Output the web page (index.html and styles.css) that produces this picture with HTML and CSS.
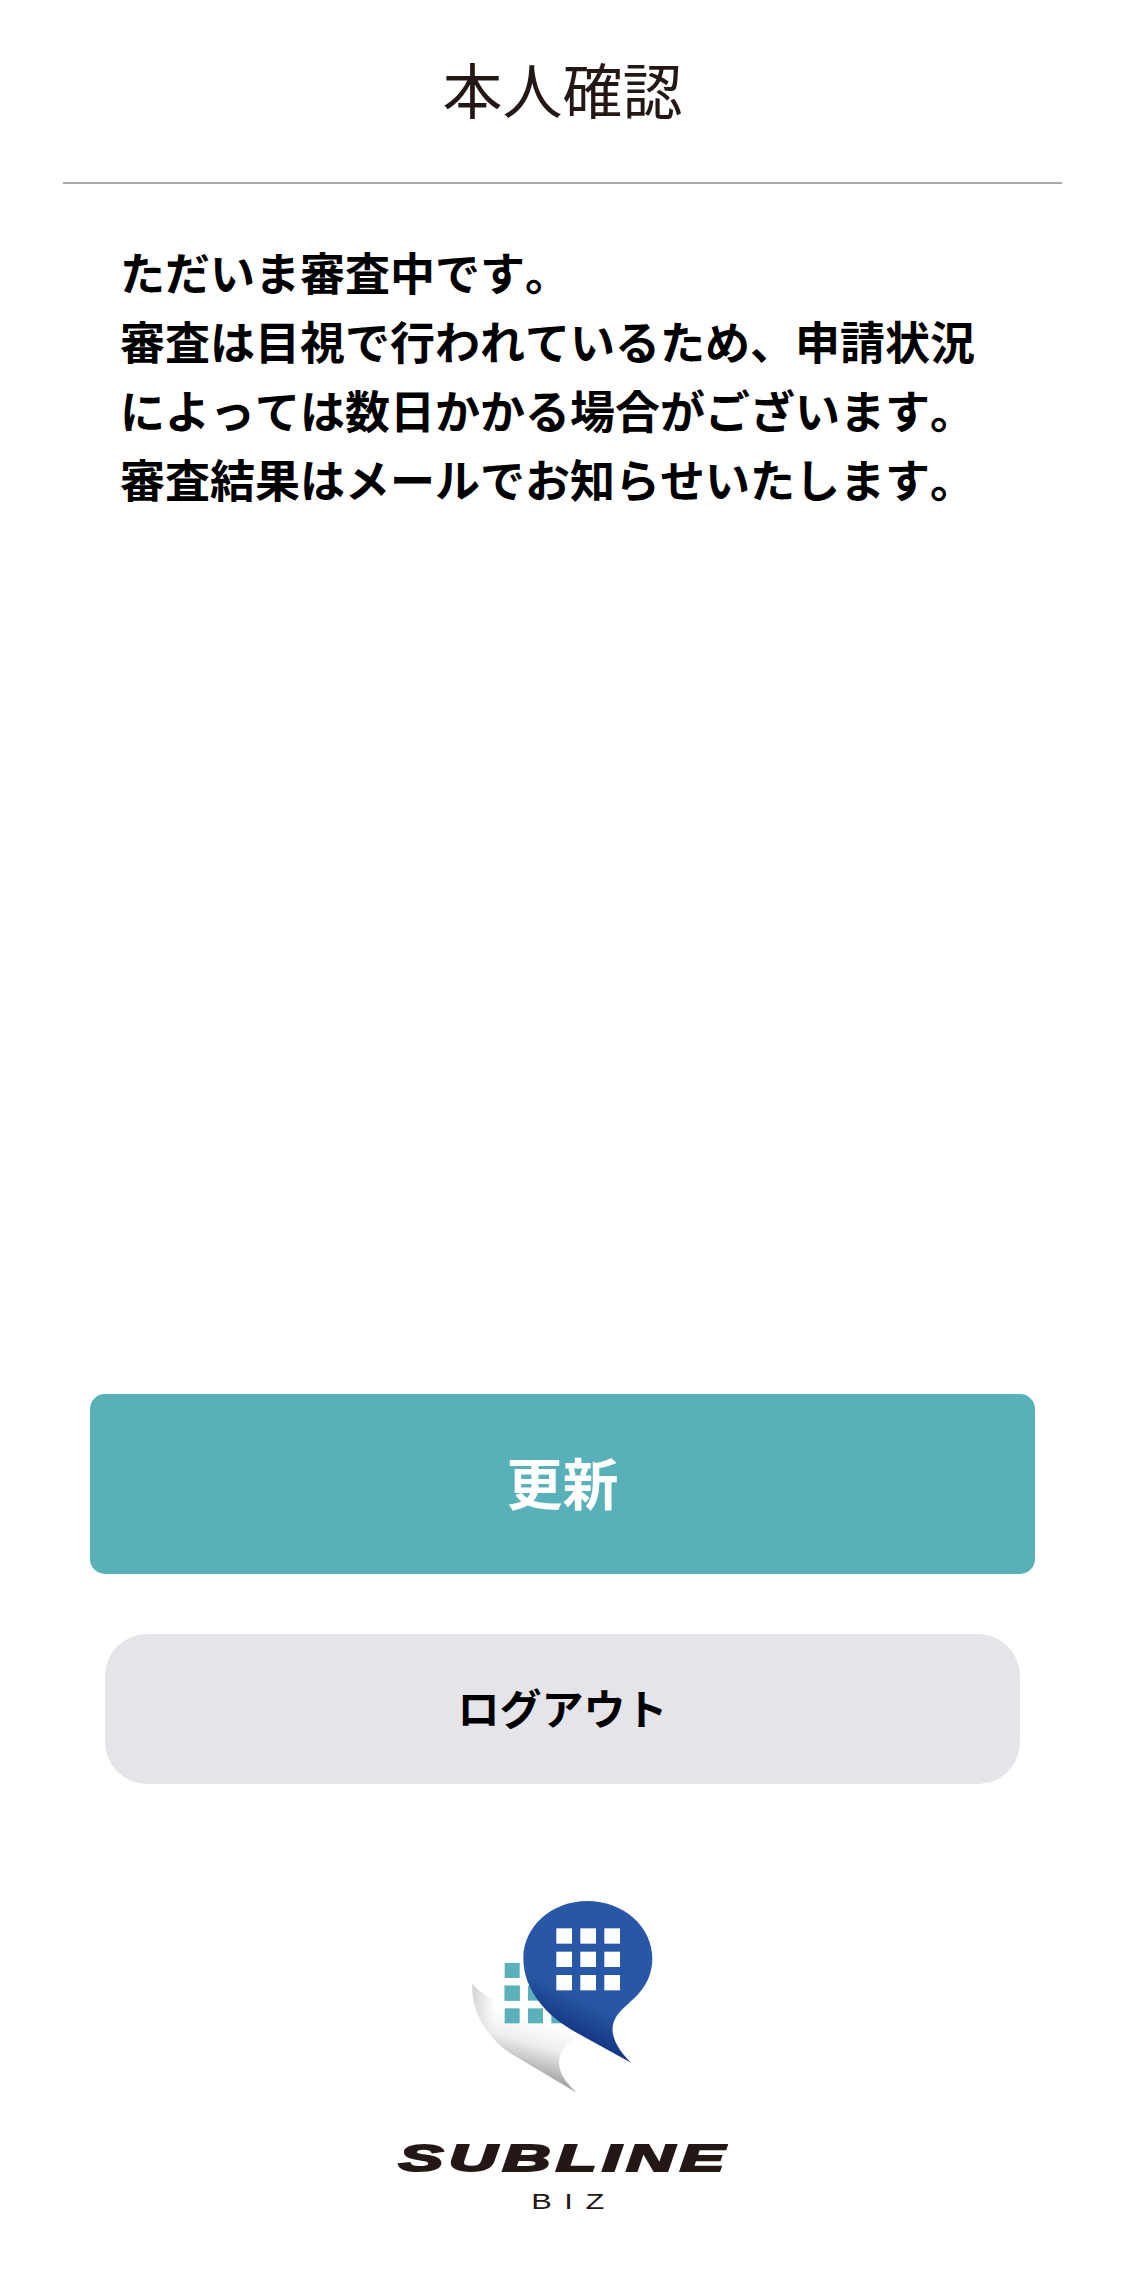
FILE: index.html
```html
<!DOCTYPE html>
<html lang="ja">
<head>
<meta charset="utf-8">
<title>本人確認</title>
<link rel="stylesheet" href="styles.css">
</head>
<body>
<main class="screen">
  <header class="header">
    <h1 class="header-title">本人確認</h1>
  </header>
  <section class="notice">
    <p class="notice-line">ただいま審査中です。</p>
    <p class="notice-line">審査は目視で行われているため、申請状況</p>
    <p class="notice-line">によっては数日かかる場合がございます。</p>
    <p class="notice-line">審査結果はメールでお知らせいたします。</p>
  </section>
  <div class="actions">
    <button class="btn-refresh" type="button">更新</button>
    <button class="btn-logout" type="button">ログアウト</button>
  </div>
  <footer class="brand">
    <svg class="brand-mark" viewBox="0 0 1110 780" aria-hidden="true">
      <defs>
        <linearGradient id="curl" gradientUnits="userSpaceOnUse" x1="440" y1="470" x2="395" y2="625">
          <stop offset="0" stop-color="#ffffff"/>
          <stop offset="0.45" stop-color="#eeeeee"/>
          <stop offset="1" stop-color="#a8a8a8"/>
        </linearGradient>
        <linearGradient id="curl-edge" gradientUnits="userSpaceOnUse" x1="277" y1="390" x2="350" y2="400">
          <stop offset="0" stop-color="#d4d4d4"/>
          <stop offset="1" stop-color="#d4d4d4" stop-opacity="0"/>
        </linearGradient>
        <linearGradient id="bubble" gradientUnits="userSpaceOnUse" x1="625" y1="370" x2="545" y2="530">
          <stop offset="0" stop-color="#2858a5"/>
          <stop offset="0.25" stop-color="#2858a5"/>
          <stop offset="1" stop-color="#11307d"/>
        </linearGradient>
      </defs>
      <!-- teal squares behind the page -->
      <g fill="#5ab0bb">
        <rect x="374" y="309" width="45" height="45"/>
        <rect x="374" y="377" width="45" height="45"/>
      </g>
      <!-- curled page -->
      <path fill="url(#curl)" d="M277 372C272 455 325 540 400 585L590 698C558 668 536 638 537 606C539 572 560 548 592 530L500 470C420 455 325 425 277 372Z"/>
      <path fill="url(#curl-edge)" d="M277 372C272 455 325 540 400 585L590 698C558 668 536 638 537 606C539 572 560 548 592 530L500 470C420 455 325 425 277 372Z"/>
      <g fill="#5ab0bb">
        <rect x="374" y="377" width="45" height="45"/>
        <rect x="444" y="377" width="45" height="45"/>
        <rect x="374" y="445" width="45" height="45"/>
        <rect x="444" y="445" width="45" height="45"/>
        <rect x="514" y="445" width="45" height="45"/>
      </g>
      <!-- speech bubble -->
      <path fill="url(#bubble)" d="M622 123C730 123 817 200 817 295C817 360 782 400 745 431C712 459 692 485 699 522C706 556 730 585 753 608L590 518C500 470 430 390 430 295C430 200 515 123 622 123Z"/>
      <g fill="#ffffff">
        <rect x="529" y="205" width="47" height="46"/>
        <rect x="601" y="205" width="47" height="46"/>
        <rect x="673" y="205" width="47" height="46"/>
        <rect x="529" y="275" width="47" height="46"/>
        <rect x="601" y="275" width="47" height="46"/>
        <rect x="673" y="275" width="47" height="46"/>
        <rect x="529" y="345" width="47" height="46"/>
        <rect x="601" y="345" width="47" height="46"/>
        <rect x="673" y="345" width="47" height="46"/>
      </g>
    </svg>
    <div class="brand-name">SUBLINE</div>
    <div class="brand-sub">BIZ</div>
  </footer>
</main>
</body>
</html>
```
FILE: styles.css
```css
* {
  box-sizing: border-box;
}

html,
body {
  margin: 0;
  padding: 0;
  background: #ffffff;
}

body {
  font-family: "Noto Sans CJK JP", "Liberation Sans", sans-serif;
  font-kerning: none;
  color: #000000;
}

.screen {
  display: flex;
  flex-direction: column;
  height: 2289px;
  overflow: hidden;
}

.header {
  display: flex;
  justify-content: center;
  align-items: center;
  height: 184px;
  margin: 0 63px;
  padding-bottom: 6px;
  border-bottom: 2px solid #a9a9a9;
}

.header-title {
  margin: 0;
  font-size: 60px;
  font-weight: 400;
  line-height: 1;
  color: #231815;
}

.notice {
  padding: 53px 0 0 120px;
}

.notice-line {
  margin: 0;
  font-size: 45px;
  font-weight: 700;
  line-height: 69px;
  white-space: nowrap;
}

.actions {
  display: flex;
  flex-direction: column;
  align-items: center;
  gap: 60px;
  margin-top: auto;
}

.btn-refresh,
.btn-logout {
  display: block;
  border: 0;
  font-family: inherit;
}

.btn-refresh {
  width: 945px;
  height: 180px;
  padding: 0 0 7px;
  border-radius: 15px;
  background: #58b0b9;
  color: #ffffff;
  font-size: 56px;
  font-weight: 700;
}

.btn-logout {
  width: 915px;
  height: 150px;
  padding: 0 0 5px;
  border-radius: 42px;
  background: #e4e4e9;
  color: #000000;
  font-size: 42px;
  font-weight: 700;
}

.brand {
  display: flex;
  flex-direction: column;
  align-items: center;
  padding: 76px 0 76px;
}

.brand-mark {
  display: block;
  width: 370px;
  height: 260px;
  margin-left: 5px;
}

.brand-name {
  margin-top: 24px;
  padding-left: 2px;
  font-family: "Liberation Sans", sans-serif;
  font-size: 36px;
  font-weight: 700;
  font-style: italic;
  line-height: 30px;
  letter-spacing: 3px;
  color: #231815;
  -webkit-text-stroke: 2px #231815;
  transform: scaleX(1.85);
}

.brand-sub {
  margin-top: 17px;
  font-family: "Liberation Sans", sans-serif;
  font-size: 22px;
  font-weight: 400;
  line-height: 22px;
  letter-spacing: 9px;
  padding-left: 17px;
  color: #231815;
  transform: scaleX(1.4);
}
```
